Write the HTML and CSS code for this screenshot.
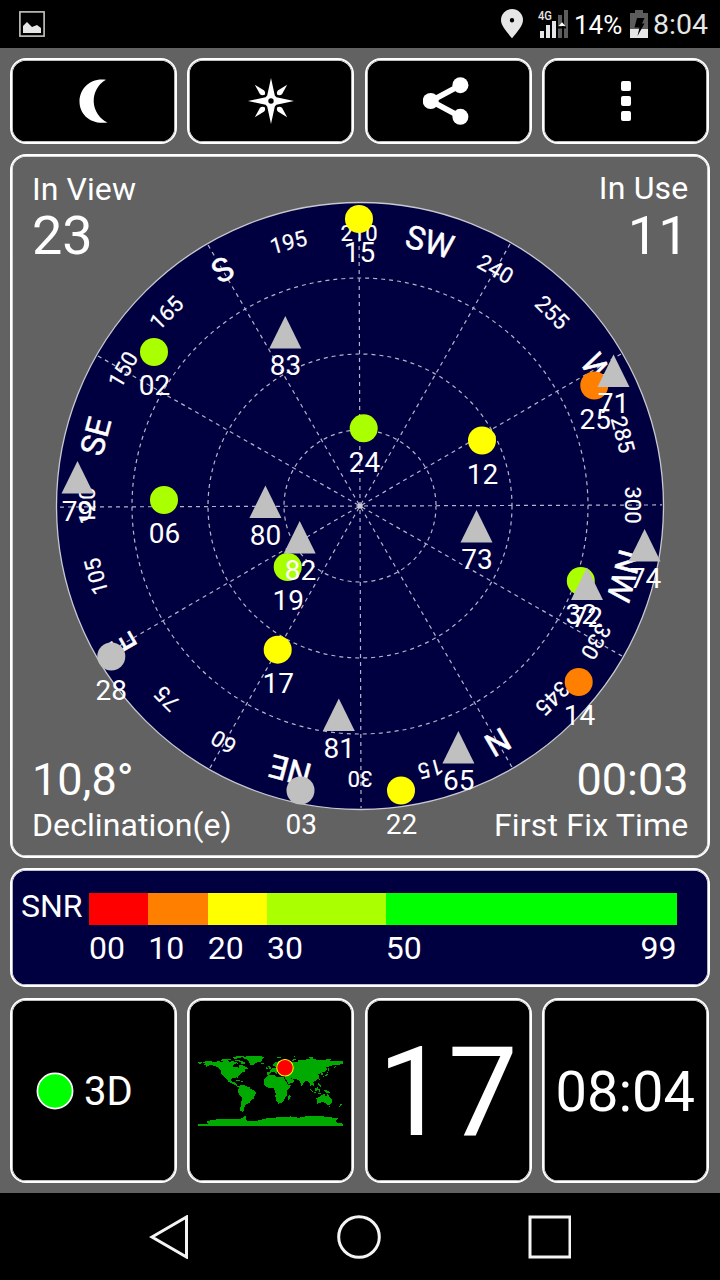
FILE: index.html
```html
<!DOCTYPE html>
<html lang="en">
<head>
<meta charset="utf-8">
<title>GPS Satellites</title>
<link rel="stylesheet" href="styles.css">
</head>
<body>
<header class="status">
  <svg class="status-picture" width="26" height="26" viewBox="0 0 26 26"><rect x=".9" y=".9" width="24.2" height="24.2" fill="none" stroke="#c8c6c0" stroke-width="1.6"/><path d="M4 22V15L8 11L13 16L18 14L22 17V22Z" fill="#e6e6e6"/></svg>
  <div class="status-right">
    <svg width="22" height="30" viewBox="0 0 22 30"><path fill="#e6e6e6" fill-rule="evenodd" d="M11 0A11 11 0 0 1 22 11C22 17 16 23 11 29.300C6 23 0 17 0 11A11 11 0 0 1 11 0ZM11 9A2.200 2.200 0 1 0 11 13.400A2.200 2.200 0 1 0 11 9Z"/></svg>
    <svg class="signal" width="31" height="30" viewBox="0 0 31 30">
      <text class="signal-text" x="0" y="11.200" textLength="14" lengthAdjust="spacingAndGlyphs">4G</text>
      <path fill="#e6e6e6" d="M2 22h4v7h-4zM8 16h4v13h-4zM14 12h4v17h-4z"/><path fill="#5c5c5c" d="M20 6h4v23h-4zM26 1h4v28h-4z"/><path d="M20 17.500h8v2h-8z" fill="#000"/><path d="M24 13.200L27.300 17H20.700Z" fill="#fff"/>
    </svg>
    <span class="percent">14%</span>
    <svg class="battery" width="18" height="28" viewBox="0 0 18 28"><path fill="#5c5c5c" d="M5 0h8v3h5v17H0V3h5z"/><path fill="#e6e6e6" d="M0 19h18v9H0z"/><path d="M7 8L14.500 8L12 13.500H14.500L7.500 26L9.500 17.500H4.500Z"/></svg>
    <span class="clock">8:04</span>
  </div>
</header>

<main class="board">
  <nav class="tiles">
    <button class="tile"><svg width="48" height="48" viewBox="-24 -24 48 48"><path fill="#fff" d="M12 -21.200C-4 -23.500 -14.500 -12 -14.500 0.500C-14.500 13 -4 24 13.500 21.500A24 24 0 0 1 12 -21.200Z"/></svg></button>
    <button class="tile"><svg width="48" height="48" viewBox="-24 -24 48 48" fill="#fff"><path fill-rule="evenodd" d="M0 -23L3.800 -5.400L5.400 -3.800L23 0L5.400 3.800L3.800 5.400L0 23L-3.800 5.400L-5.400 3.800L-23 0L-5.400 -3.800L-3.800 -5.400ZM0 -2.700A2.700 2.700 0 1 0 0 2.700A2.700 2.700 0 1 0 0 -2.700Z"/><path d="M-16.200 -16.200L-6.800 -10.400Q-5.400 -9 -6 -6.600Q-8.500 -5 -11 -6.800Z"/><path d="M16.200 -16.200L6.800 -10.400Q5.400 -9 6 -6.600Q8.500 -5 11 -6.800Z"/><path d="M-16.200 16.200L-6.800 10.400Q-5.400 9 -6 6.600Q-8.500 5 -11 6.800Z"/><path d="M16.200 16.200L6.800 10.400Q5.400 9 6 6.600Q8.500 5 11 6.800Z"/></svg></button>
    <button class="tile"><svg width="50" height="50" viewBox="-25 -25 50 50"><path d="M12.400 -15.800L-17 0L12.400 15.800" fill="none" stroke="#fff" stroke-width="5.600"/><g fill="#fff"><circle cx="-17.300" cy="0" r="8"/><circle cx="12.400" cy="-15.800" r="8"/><circle cx="12.400" cy="15.800" r="8"/></g></svg></button>
    <button class="tile"><svg width="10" height="40" viewBox="0 0 10 40" fill="#fff"><rect width="10" height="10" rx="2"/><rect y="15" width="10" height="10" rx="2"/><rect y="30" width="10" height="10" rx="2"/></svg></button>
  </nav>

  <section class="sky">
    <div class="corner top-left"><div class="label">In View</div><div class="count">23</div></div>
    <div class="corner top-right"><div class="label">In Use</div><div class="count">11</div></div>
    <div class="corner bottom-left"><div class="value">10,8°</div><div class="label">Declination(e)</div></div>
    <div class="corner bottom-right"><div class="value">00:03</div><div class="label">First Fix Time</div></div>
    <svg class="dial" width="696" height="700" viewBox="12 156 696 700">
      <circle class="disc" cx="360" cy="506" r="303.500"/>
      <g class="grid-lines" transform="rotate(-.2 360 506)">
        <circle cx="360" cy="506" r="76"/><circle cx="360" cy="506" r="152"/><circle cx="360" cy="506" r="228"/>
        <path d="M360 206V808M60 506H662"/>
        <path d="M209 244.500L511 767.500M511 244.500L209 767.500M98.500 355L621.500 657M98.500 657L621.500 355"/>
      </g>
      <circle cx="360" cy="506" r="2.600" fill="#c9c9d6"/>
      <g class="degrees" transform="translate(-.5 -.5)">
        <text x="359.500" y="241">210</text>
        <text x="359.500" y="241" transform="rotate(30 360 506)">240</text>
        <text x="359.500" y="241" transform="rotate(45 360 506)">255</text>
        <text x="359.500" y="241" transform="rotate(75 360 506)">285</text>
        <text x="359.500" y="241" transform="rotate(90 360 506)">300</text>
        <text x="359.500" y="241" transform="rotate(120 360 506)">330</text>
        <text x="359.500" y="241" transform="rotate(135 360 506)">345</text>
        <text x="359.500" y="241" transform="rotate(165 360 506)">15</text>
        <text x="359.500" y="241" transform="rotate(180 360 506)">30</text>
        <text x="359.500" y="241" transform="rotate(210 360 506)">60</text>
        <text x="359.500" y="241" transform="rotate(225 360 506)">75</text>
        <text x="359.500" y="241" transform="rotate(255 360 506)">105</text>
        <text x="359.500" y="241" transform="rotate(270 360 506)">120</text>
        <text x="359.500" y="241" transform="rotate(300 360 506)">150</text>
        <text x="359.500" y="241" transform="rotate(315 360 506)">165</text>
        <text x="359.500" y="241" transform="rotate(345 360 506)">195</text>
      </g>
      <g class="cardinals">
        <text x="359" y="244" transform="rotate(15 360 506)">SW</text>
        <text x="359" y="244" transform="rotate(60 360 506)">W</text>
        <text x="359" y="244" transform="rotate(105 360 506)">NW</text>
        <text x="359" y="244" transform="rotate(150 360 506)">N</text>
        <text x="359" y="244" transform="rotate(195 360 506)">NE</text>
        <text x="359" y="244" transform="rotate(240 360 506)">E</text>
        <text x="359" y="244" transform="rotate(285 360 506)">SE</text>
        <text x="359" y="244" transform="rotate(330 360 506)">S</text>
      </g>
      <g class="sats">
        <g transform="translate(154 352)"><circle class="lime" r="14"/><text x=".5" y="43">02</text></g>
        <g transform="translate(300.500 790.500)"><circle class="idle" r="14"/><text x=".8" y="43.500">03</text></g>
        <g transform="translate(164 500)"><circle class="lime" r="14"/><text x=".5" y="43">06</text></g>
        <g transform="translate(482 440.500)"><circle class="yellow" r="14"/><text x=".5" y="43.500">12</text></g>
        <g transform="translate(578.700 682)"><circle class="orange" r="14"/><text x=".8" y="43">14</text></g>
        <g transform="translate(359 219)"><circle class="yellow" r="14"/><text x=".5" y="43">15</text></g>
        <g transform="translate(277.700 649.700)"><circle class="yellow" r="14"/><text x=".5" y="43.300">17</text></g>
        <g transform="translate(287.700 567)"><circle class="lime" r="14"/><text x=".5" y="43">19</text></g>
        <g transform="translate(401 790.500)"><circle class="yellow" r="14"/><text x=".5" y="43.500">22</text></g>
        <g transform="translate(363.700 428.300)"><circle class="lime" r="14"/><text x=".8" y="43.700">24</text></g>
        <g transform="translate(594.300 385.500)"><circle class="orange" r="14"/><text x="1" y="43.500">25</text></g>
        <g transform="translate(111.300 656.500)"><circle class="idle" r="14"/><text x="0" y="43.500">28</text></g>
        <g transform="translate(580.800 581)"><circle class="lime" r="14"/><text x=".5" y="43">32</text></g>
        <g transform="translate(458.400 731)"><path class="idle" d="M0 0L16 32.500H-16Z"/><text x=".3" y="59">65</text></g>
        <g transform="translate(613.500 354.500)"><path class="idle" d="M0 0L16 32.500H-16Z"/><text y="58.500">71</text></g>
        <g transform="translate(587 567.500)"><path class="idle" d="M0 0L16 32.500H-16Z"/><text x=".3" y="59.500">72</text></g>
        <g transform="translate(476.500 510)"><path class="idle" d="M0 0L16 32.500H-16Z"/><text x=".5" y="59">73</text></g>
        <g transform="translate(644.600 529)"><path class="idle" d="M0 0L16 32.500H-16Z"/><text x="1" y="59">74</text></g>
        <g transform="translate(77.500 461)"><path class="idle" d="M0 0L16 32.500H-16Z"/><text y="60">79</text></g>
        <g transform="translate(265.400 485.500)"><path class="idle" d="M0 0L16 32.500H-16Z"/><text y="59.500">80</text></g>
        <g transform="translate(338.800 698.500)"><path class="idle" d="M0 0L16 32.500H-16Z"/><text x=".5" y="59.500">81</text></g>
        <g transform="translate(299.700 521)"><path class="idle" d="M0 0L16 32.500H-16Z"/><text x=".8" y="59">82</text></g>
        <g transform="translate(285.300 316)"><path class="idle" d="M0 0L16 32.500H-16Z"/><text x=".2" y="59">83</text></g>
      </g>
    </svg>
  </section>

  <section class="snr">
    <div class="snr-title">SNR</div>
    <div class="snr-bar"><i class="s10 red"></i><i class="s10 orange"></i><i class="s10 yellow"></i><i class="s20 lime"></i><i class="s49 green"></i></div>
    <div class="snr-scale"><span class="s10">00</span><span class="s10">10</span><span class="s10">20</span><span class="s20">30</span><span class="s49 ends"><b>50</b><b>99</b></span></div>
  </section>

  <section class="tiles lower">
    <div class="tile fix"><svg width="38" height="38" viewBox="-19 -19 38 38"><circle r="17.600" fill="#0f0" stroke="#fff" stroke-width="1.700"/></svg><span>3D</span></div>
    <div class="tile"><svg class="map" width="145" height="73" viewBox="-180 -90 360 180">
      <g class="land">
        <path d="M-168 -66L-162 -71L-156 -71L-140 -69L-128 -70L-115 -68L-100 -68L-95 -72L-88 -67L-82 -69L-82 -66L-87 -64L-94 -60L-92 -57L-82 -55L-80 -51L-78 -55L-77 -62L-70 -61L-65 -58L-60 -55L-56 -52L-66 -49L-60 -46L-70 -43L-75 -38L-81 -31L-80 -25L-84 -30L-90 -29L-97 -27L-97 -20L-91 -18L-87 -21L-88 -16L-83 -14L-82 -8L-77 -8L-80 -6L-92 -14L-103 -18L-109 -26L-114 -31L-118 -34L-124 -40L-124 -48L-133 -56L-145 -60L-152 -60L-162 -55L-158 -59L-166 -61L-162 -64Z"/>
        <path d="M-180 -71L-178 -68L-170 -67L-172 -64L-180 -65Z"/>
        <path d="M-124 -73L-116 -73L-106 -73L-102 -69L-117 -69ZM-125 -75L-110 -77L-95 -75L-110 -73ZM-90 -74L-80 -74L-70 -70L-62 -66L-66 -62L-72 -64L-74 -69L-88 -71ZM-95 -80L-82 -83L-62 -83L-76 -78L-90 -76ZM-85 -64L-80 -65L-82 -62Z"/>
        <path d="M-73 -78L-60 -82L-35 -84L-16 -81L-20 -75L-22 -70L-36 -66L-43 -60L-50 -62L-54 -69L-59 -76Z"/>
        <path d="M-24 -66L-14 -66L-16 -63L-22 -64ZM-85 -22L-75 -20L-74 -22L-83 -24ZM-74 -20L-68 -20L-70 -17L-75 -18Z"/>
        <path d="M-80 -7L-75 -11L-66 -11L-60 -8L-52 -5L-49 -1L-40 3L-35 7L-39 14L-41 22L-48 26L-53 34L-58 35L-62 39L-65 43L-67 48L-65 51L-69 55L-75 52L-75 45L-73 37L-71 20L-77 13L-81 5L-80 0L-77 -3Z"/>
        <path d="M-17 -15L-16 -24L-9 -31L-5 -36L10 -37L11 -33L20 -31L33 -31L37 -22L43 -12L51 -12L48 -5L40 3L40 10L40 16L35 22L32 28L27 34L19 35L15 28L12 18L13 10L9 0L8 -4L-7 -5L-14 -9Z"/>
        <path d="M44 17L49 12L50 17L47 25L43 25Z"/>
        <path d="M-10 -43L-9 -37L-3 -37L1 -41L4 -44L9 -44L15 -39L17 -41L13 -45L20 -41L23 -37L27 -41L41 -42L36 -37L28 -37L35 -35L36 -29L43 -18L45 -13L55 -17L60 -23L55 -25L49 -29L54 -27L66 -25L73 -20L77 -8L80 -13L87 -21L92 -22L97 -16L100 -8L104 -2L101 -9L101 -13L106 -9L109 -12L106 -19L112 -22L121 -28L121 -34L118 -38L125 -40L127 -35L130 -38L128 -42L135 -44L141 -52L137 -54L155 -60L163 -62L157 -52L164 -60L178 -63L180 -65V-70L160 -70L140 -73L113 -74L103 -78L85 -74L70 -73L68 -69L45 -67L28 -71L15 -69L5 -62L6 -58L11 -59L14 -55L19 -60L18 -64L24 -66L22 -61L30 -60L22 -58L20 -54L8 -54L3 -51L-2 -48L-1 -44Z"/>
        <path d="M-6 -58L-2 -58L2 -52L-5 -50L-3 -54ZM-10 -55L-6 -54L-7 -52L-10 -52ZM52 -71L56 -76L68 -77L58 -72ZM12 -79L20 -80L28 -80L18 -77ZM45 -81L60 -82V-80H47ZM95 -80L104 -81L108 -78H97ZM138 -76L150 -76V-74H139Z"/>
        <path d="M130 -31L132 -34L138 -36L140 -41L143 -43L146 -44L141 -42L142 -36L136 -33ZM142 -47L142 -54L144 -54V-47ZM120 -18V-14L124 -12L126 -6L121 -8L118 -14ZM80 -9L82 -8L81 -6ZM120 -25L122 -25L121 -22Z"/>
        <path d="M95 -5L103 2L106 6L115 8L115 9L105 7L100 1ZM109 -2L118 -7L118 0L115 4L110 3ZM119 -1L125 -1L122 1L123 5L120 5ZM131 1L142 3L150 10L143 9L137 7ZM117 8H126V10H117Z"/>
        <path d="M114 22L122 18L130 12L136 12L136 15L140 17L142 11L146 18L153 25L152 33L147 38L140 38L135 33L130 31L116 35ZM145 41H148L147 43ZM173 35L178 38L174 42ZM172 41L168 46L171 46Z"/>
        <path d="M-180 90V85L-155 85L-158 80L-148 76L-130 74L-100 74L-75 73L-67 68L-58 64L-62 70L-62 76L-50 79L-35 78L-15 73L0 70L30 69L50 67L70 70L90 66L120 66L145 68L168 72L162 76L165 82L180 85V90Z"/>
      </g>
      <circle class="marker" cx="36" cy="-54" r="20.500"/>
    </svg></div>
    <div class="tile used">17</div>
    <div class="tile time">08:04</div>
  </section>
</main>

<footer class="nav">
  <div><svg width="44" height="44" viewBox="-22 -22 44 44"><path d="M-17 0L17.500 -20V20Z"/></svg></div>
  <div><svg width="44" height="44" viewBox="-22 -22 44 44"><circle r="20.300"/></svg></div>
  <div><svg width="44" height="44" viewBox="-22 -22 44 44"><rect x="-19" y="-20" width="40" height="40"/></svg></div>
</footer>
</body>
</html>
```
FILE: styles.css
```css
* { box-sizing: border-box; }
body {
  margin: 0;
  width: 720px;
  height: 1280px;
  display: flex;
  flex-direction: column;
  background: #000;
  color: #fff;
  font-family: Roboto, "Noto Sans", sans-serif;
  overflow: hidden;
}
svg { display: block; flex: none; }

.status {
  height: 48px;
  padding: 0 12px 0 19px;
  display: flex;
  align-items: center;
  justify-content: space-between;
}
.status-right { display: flex; align-items: center; height: 48px; }
.signal { margin-left: 15px; }
.signal-text { font-size: 13px; font-weight: 500; fill: #e6e6e6; }
.percent { width: 50px; margin-left: 5px; font-size: 26px; line-height: 48px; padding-top: 1px; }
.battery { margin: 0 5px 0 6px; }
.clock { font-size: 28.5px; line-height: 48px; color: #e6e6e6; padding-top: 2px; width: 55px; }

.board {
  height: 1145px;
  padding: 10px;
  background: #626262;
  display: grid;
  grid-template-rows: 86px 704px 119px 186px;
  row-gap: 10px;
}
.tiles {
  display: grid;
  grid-template-columns: repeat(4, 167px);
  column-gap: 10.4px;
}
.lower { padding-top: 1px; }
.tile, .sky, .snr {
  border: 2px solid #fff;
  border-radius: 16px;
  box-shadow: inset 0 0 0 .7px #fff;
}
.tile {
  display: flex;
  align-items: center;
  justify-content: center;
  padding: 0;
  background: #000;
  color: #fff;
  font-family: inherit;
}

.sky { display: grid; grid-template: 700px / 696px; }
.sky > * { grid-area: 1 / 1; }
.corner { padding: 13px 19.5px 11px 20px; }
.top-left { place-self: start; }
.top-right { place-self: start end; text-align: right; padding-top: 12px; }
.bottom-left { place-self: end start; }
.bottom-right { place-self: end; text-align: right; }
.label { font-size: 32px; line-height: 40px; letter-spacing: .08px; }
.bottom-right .label, .top-right .label { letter-spacing: .2px; }
.count { font-size: 54px; line-height: 54px; }
.top-right .count { line-height: 56px; }
.value { font-size: 45px; line-height: 50px; }

.disc { fill: #000040; stroke: #c8c8d0; stroke-width: 1.3; }
.grid-lines { fill: none; stroke: #b4b4c8; stroke-width: 1.2; stroke-dasharray: 4 4; }
.dial text { fill: #fff; text-anchor: middle; }
.degrees { font-size: 22px; stroke: #fff; stroke-width: .2; }
.cardinals { font-size: 32.5px; stroke: #fff; stroke-width: .5; }
.sats { font-size: 28px; }
.dial .idle { fill: #c0c0c0; }
.dial .lime { fill: #af0; }
.dial .yellow { fill: #ff0; }
.dial .orange { fill: #ff8000; }

.snr {
  background: #000040;
  display: grid;
  grid-template: 42px 40px / 68px 587.5px;
  padding: 16px 0 0 9px;
  font-size: 32px;
  line-height: 40px;
}
.snr-bar { display: flex; height: 32px; margin-top: 7px; }
.snr-scale { display: flex; grid-column: 2; }
.snr-bar i { height: 32px; }
.s10 { flex: 10 0 0; }
.s20 { flex: 20 0 0; }
.s49 { flex: 49 0 0; }
.ends { display: flex; justify-content: space-between; }
.ends b { font-weight: 400; }
i.red { background: #f00; }
i.orange { background: #ff8000; }
i.yellow { background: #ff0; }
i.lime { background: #af0; }
i.green { background: #0f0; }

.fix { justify-content: flex-start; padding-left: 24px; gap: 10px; font-size: 40px; }
.fix span { padding-top: 2px; }
.used { font-size: 124.5px; padding-top: 3px; padding-right: 1px; }
.time { font-size: 56px; padding-top: 2px; padding-right: 1px; }
.land { fill: #0a0; shape-rendering: crispEdges; }
.map { overflow: visible; margin-bottom: 2px; }
.marker { fill: #f00; stroke: #ff0; stroke-width: 2.5; }

.nav { height: 87px; padding-right: 2px; display: flex; justify-content: center; align-items: center; }
.nav div { width: 190px; display: flex; justify-content: center; }
.nav svg { fill: none; stroke: #f4f4f4; stroke-width: 3; }
```
